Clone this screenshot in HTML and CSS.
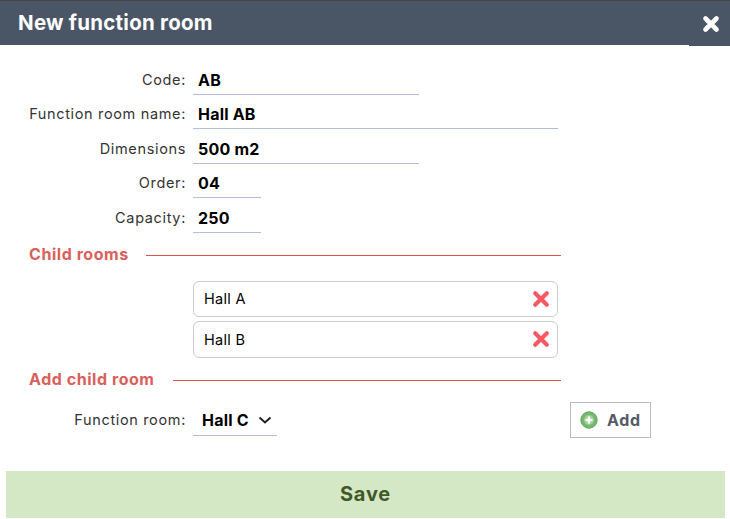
FILE: index.html
```html
<!DOCTYPE html>
<html lang="en">
<head>
  <meta charset="UTF-8" />
  <title>New function room</title>
  <link rel="stylesheet" href="styles.css">
</head>
<body>

  <div class="dialog">
    <header class="dialog-head">
      <h1>New function room</h1>
      <button class="close" type="button" aria-label="Close">
        <svg width="18" height="18" viewBox="0 0 18 18"><path d="M3.5 3.5 L14.5 14.5 M14.5 3.5 L3.5 14.5" stroke="#fff" stroke-width="4.6" stroke-linecap="round"/></svg>
      </button>
    </header>

    <form class="dialog-body">
      <div class="field">
        <label>Code:</label>
        <span class="value w-mid">AB</span>
      </div>
      <div class="field">
        <label>Function room name:</label>
        <span class="value w-long">Hall AB</span>
      </div>
      <div class="field">
        <label>Dimensions</label>
        <span class="value w-mid">500 m2</span>
      </div>
      <div class="field">
        <label>Order:</label>
        <span class="value w-short">04</span>
      </div>
      <div class="field">
        <label>Capacity:</label>
        <span class="value w-short">250</span>
      </div>

      <div class="section section-child">
        <h2>Child rooms</h2>
        <span class="rule"></span>
      </div>

      <ul class="children">
        <li>
          <span>Hall A</span>
          <svg class="remove" width="18" height="18" viewBox="0 0 18 18"><path d="M3.2 3.2 L14.8 14.8 M14.8 3.2 L3.2 14.8" stroke="#fb5a64" stroke-width="4.2" stroke-linecap="round"/></svg>
        </li>
        <li>
          <span>Hall B</span>
          <svg class="remove" width="18" height="18" viewBox="0 0 18 18"><path d="M3.2 3.2 L14.8 14.8 M14.8 3.2 L3.2 14.8" stroke="#fb5a64" stroke-width="4.2" stroke-linecap="round"/></svg>
        </li>
      </ul>

      <div class="section section-add">
        <h2>Add child room</h2>
        <span class="rule"></span>
      </div>

      <div class="field field-add">
        <label>Function room:</label>
        <span class="value select">
          Hall C
          <svg width="14" height="8" viewBox="0 0 14 8"><path d="M1.5 1.5 L7 6.5 L12.5 1.5" fill="none" stroke="#222" stroke-width="2"/></svg>
        </span>
        <button class="add" type="button">
          <svg width="18" height="18" viewBox="0 0 18 18">
            <circle cx="9" cy="9" r="8.2" fill="#74b96d" stroke="#62a65d" stroke-width="1"/>
            <circle cx="9" cy="9" r="5" fill="#9ccf94"/>
            <path d="M9 5.5 V12.5 M5.5 9 H12.5" stroke="#fff" stroke-width="2.4"/>
          </svg>
          Add
        </button>
      </div>

      <button class="save" type="button">Save</button>
    </form>
  </div>

</body>
</html>
```

FILE: styles.css
```css
* {
  margin: 0;
  padding: 0;
  box-sizing: border-box;
}

body {
  font-family: Inter, 'Open Sans', sans-serif;
  font-size: 14px;
  background: #fff;
  color: #222;
  overflow: hidden;
}

.dialog {
  width: 730px;
  height: 519px;
}

.dialog-head {
  display: flex;
  justify-content: space-between;
  height: 45px;
  background: #4a5565;
  border-top: 1px solid #47474a;
}

.dialog-head h1 {
  margin-left: 18px;
  font-size: 20.5px;
  font-weight: 700;
  letter-spacing: 0.25px;
  line-height: 43px;
  color: #fff;
}

.close {
  display: flex;
  align-items: center;
  justify-content: center;
  width: 41px;
  height: 45px;
  padding: 1px 0 0 3px;
  border: none;
  background: #4a5565;
}

.dialog-body {
  padding: 15px 0 0 6px;
}

.field {
  display: flex;
  align-items: flex-end;
  height: 34.5px;
}

.field label {
  width: 180px;
  padding-bottom: 7px;
  text-align: right;
  font-size: 14.5px;
  letter-spacing: 0.65px;
  color: #333;
}

.value {
  margin-left: 7px;
  padding: 0 0 4px 5px;
  border-bottom: 1px solid #b0bedb;
  font-size: 16px;
  font-weight: 700;
  letter-spacing: 0.2px;
  line-height: 20px;
  color: #000;
}

.w-short { width: 68px; }
.w-mid { width: 226px; }
.w-long { width: 365px; }

.section {
  display: flex;
  align-items: center;
  width: 532px;
  margin-left: 23px;
}

.section h2 {
  margin-bottom: 4px;
  font-size: 16px;
  font-weight: 700;
  letter-spacing: 0.55px;
  line-height: 20px;
  color: #d9605a;
}

.rule {
  flex: 1;
  height: 1px;
  background: #d9534f;
}

.section-child {
  margin-top: 11px;
}

.section-child h2 {
  margin-right: 17px;
}

.section-add {
  margin-top: 11px;
}

.section-add h2 {
  margin-right: 18px;
}

.children {
  list-style: none;
  width: 365px;
  margin: 13px 0 0 187px;
}

.children li {
  display: flex;
  align-items: center;
  justify-content: space-between;
  height: 36.5px;
  margin-bottom: 4px;
  padding: 0 7px 0 10px;
  border: 1px solid #ccc;
  border-radius: 6px;
  font-size: 14.5px;
  letter-spacing: 0.3px;
  color: #000;
}

.field-add {
  height: 43px;
}

.field-add label {
  padding-bottom: 8px;
}

.select {
  display: flex;
  align-items: center;
  justify-content: space-between;
  width: 84px;
  padding: 0 5px 5px 9px;
}

.add {
  display: flex;
  align-items: center;
  gap: 9px;
  width: 81px;
  height: 36px;
  margin: 0 0 -2px 293px;
  padding-left: 9px;
  border: 1px solid #bbb;
  background: #fff;
  font-family: inherit;
  font-size: 16px;
  font-weight: 700;
  letter-spacing: 0.7px;
  color: #555b66;
}

.save {
  display: block;
  width: 719px;
  height: 47px;
  margin-top: 35px;
  border: none;
  background: #d5e8c5;
  font-family: inherit;
  font-size: 20px;
  font-weight: 700;
  letter-spacing: 0.8px;
  color: #3f5a26;
}
```
